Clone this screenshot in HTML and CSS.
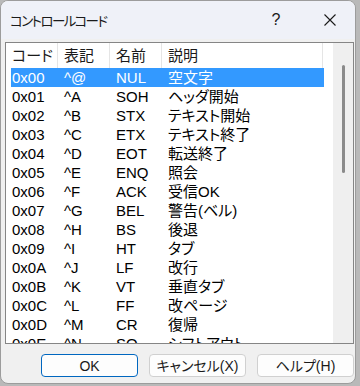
FILE: index.html
```html
<!DOCTYPE html>
<html lang="ja">
  <head>
    <meta charset="UTF-8" />
    <meta name="viewport" content="width=device-width, initial-scale=1.0" />
    <title>コントロールコード</title>
    <link rel="stylesheet" href="styles.css">
  </head>
  <body>
    <div class="window">
      <div class="title_bar">
        <span class="title">コントロールコード</span>
        <span class="help_btn">?</span>
        <span class="close_btn">
          <svg width="12" height="12" viewBox="0 0 12 12">
            <path d="M0.5 0.5 L11.5 11.5 M11.5 0.5 L0.5 11.5" stroke="#1a1a1a" stroke-width="1.1" fill="none" />
          </svg>
        </span>
      </div>
      <div class="content">
        <div class="list_box">
          <div class="list_view">
            <div class="header">
              <span class="col c1">コード</span>
              <span class="col c2">表記</span>
              <span class="col c3">名前</span>
              <span class="col c4">説明</span>
            </div>
            <div class="rows">
              <div class="row selected"><span class="col c1">0x00</span><span class="col c2">^@</span><span class="col c3">NUL</span><span class="col c4">空文字</span></div>
              <div class="row"><span class="col c1">0x01</span><span class="col c2">^A</span><span class="col c3">SOH</span><span class="col c4">ヘッダ開始</span></div>
              <div class="row"><span class="col c1">0x02</span><span class="col c2">^B</span><span class="col c3">STX</span><span class="col c4">テキスト開始</span></div>
              <div class="row"><span class="col c1">0x03</span><span class="col c2">^C</span><span class="col c3">ETX</span><span class="col c4">テキスト終了</span></div>
              <div class="row"><span class="col c1">0x04</span><span class="col c2">^D</span><span class="col c3">EOT</span><span class="col c4">転送終了</span></div>
              <div class="row"><span class="col c1">0x05</span><span class="col c2">^E</span><span class="col c3">ENQ</span><span class="col c4">照会</span></div>
              <div class="row"><span class="col c1">0x06</span><span class="col c2">^F</span><span class="col c3">ACK</span><span class="col c4">受信OK</span></div>
              <div class="row"><span class="col c1">0x07</span><span class="col c2">^G</span><span class="col c3">BEL</span><span class="col c4">警告(ベル)</span></div>
              <div class="row"><span class="col c1">0x08</span><span class="col c2">^H</span><span class="col c3">BS</span><span class="col c4">後退</span></div>
              <div class="row"><span class="col c1">0x09</span><span class="col c2">^I</span><span class="col c3">HT</span><span class="col c4">タブ</span></div>
              <div class="row"><span class="col c1">0x0A</span><span class="col c2">^J</span><span class="col c3">LF</span><span class="col c4">改行</span></div>
              <div class="row"><span class="col c1">0x0B</span><span class="col c2">^K</span><span class="col c3">VT</span><span class="col c4">垂直タブ</span></div>
              <div class="row"><span class="col c1">0x0C</span><span class="col c2">^L</span><span class="col c3">FF</span><span class="col c4">改ページ</span></div>
              <div class="row"><span class="col c1">0x0D</span><span class="col c2">^M</span><span class="col c3">CR</span><span class="col c4">復帰</span></div>
              <div class="row"><span class="col c1">0x0E</span><span class="col c2">^N</span><span class="col c3">SO</span><span class="col c4">シフトアウト</span></div>
            </div>
          </div>
          <div class="scroll_bar">
            <div class="thumb"></div>
          </div>
        </div>
        <div class="buttons">
          <button class="btn default">OK</button>
          <button class="btn">キャンセル(X)</button>
          <button class="btn">ヘルプ(H)</button>
        </div>
      </div>
    </div>
  </body>
</html>
```

FILE: styles.css
```css
body {
  margin: 0;
  width: 360px;
  height: 386px;
  overflow: hidden;
  background-color: #b9b9b9;
  font-family: "Liberation Sans", "Noto Sans CJK JP", sans-serif;
  font-feature-settings: "palt";
  color: #000000;
}

.window {
  width: 356px;
  height: 384px;
  box-sizing: border-box;
  border: 1px solid #9c9c9c;
  border-radius: 8px;
  background-color: #f0f0f0;
  overflow: hidden;
  display: flex;
  flex-direction: column;
}

.title_bar {
  height: 38px;
  flex-shrink: 0;
  background-color: #eff1f8;
  display: flex;
  align-items: center;
  padding-left: 9px;
}

.title {
  font-size: 13.5px;
  letter-spacing: -1.6px;
  flex: 1;
  color: #1a1a1a;
}

.help_btn {
  font-size: 16px;
  width: 20px;
  text-align: center;
  margin-right: 38px;
  color: #1a1a1a;
}

.close_btn {
  width: 12px;
  height: 12px;
  margin-right: 19px;
  display: flex;
}

.content {
  flex: 1;
  padding: 3px 1px 0 4px;
  display: flex;
  flex-direction: column;
}

.list_box {
  height: 302px;
  box-sizing: border-box;
  border: 1px solid #858585;
  background-color: #ffffff;
  display: flex;
  overflow: hidden;
}

.list_view {
  flex: 1;
  padding-left: 5px;
  font-size: 15px;
  overflow: hidden;
}

.header {
  height: 25px;
  display: flex;
  align-items: stretch;
  width: 313px;
}

.header .col {
  border-right: 1px solid #e5e5e5;
  line-height: 25px;
  color: #1a1a1a;
}

.row {
  height: 19px;
  line-height: 19px;
  display: flex;
  width: 313px;
}

.row.selected {
  background-color: #3399ff;
  color: #ffffff;
}

.col {
  display: block;
  box-sizing: border-box;
  white-space: nowrap;
  overflow: hidden;
}

.c1 {
  width: 47px;
  padding-left: 1px;
}

.c2 {
  width: 52px;
  padding-left: 6px;
}

.c3 {
  width: 52px;
  padding-left: 6px;
}

.c4 {
  width: 161px;
  padding-left: 6px;
}

.scroll_bar {
  width: 20px;
  flex-shrink: 0;
  background-color: #efefef;
  display: flex;
  justify-content: center;
  padding-top: 22px;
  box-sizing: border-box;
}

.thumb {
  width: 3px;
  height: 108px;
  border-radius: 2px;
  background-color: #8a8a8a;
}

.buttons {
  display: flex;
  justify-content: flex-end;
  gap: 11px;
  margin-top: 10px;
}

.btn {
  width: 97px;
  height: 23px;
  box-sizing: border-box;
  border: 1px solid #d0d0d0;
  border-radius: 4px;
  background-color: #fdfdfd;
  font-family: "Liberation Sans", "Noto Sans CJK JP", sans-serif;
  font-feature-settings: "palt";
  font-size: 14px;
  color: #1a1a1a;
  padding: 0;
  line-height: 20px;
}

.btn.default {
  border-color: #0067c0;
}
```
